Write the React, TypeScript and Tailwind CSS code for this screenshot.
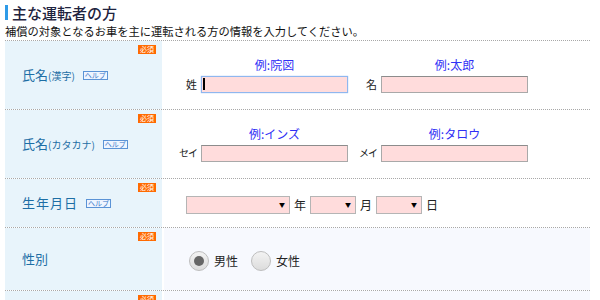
import React from 'react'

const jp = { fontFamily: '"Noto Sans CJK JP", "Noto Sans", sans-serif' }

const Badge = () => (
    <span className="absolute right-[6px] top-[4px] bg-[#ff6a00] text-white text-[7px] leading-[9px] px-[2px] h-[9px]">
        必須
    </span>
)

const Help = () => (
    <span className="ml-[8px] inline-flex items-center h-[9px] px-[1px] border border-[#5b93d6] bg-[#eef5ff] text-[#3a78c9] text-[7px] leading-none">
        ヘルプ
    </span>
)

const Row: React.FC<{ label: React.ReactNode; h: string; alt?: boolean; children?: React.ReactNode }> = ({ label, h, alt, children }) => (
    <div className={`flex border-b border-dotted border-[#a8a8a8] ${h}`}>
        <div className="relative w-[157px] shrink-0 bg-[#e8f4fb] flex items-center pl-[17px] text-[#1d6ea5]">
            <Badge />
            {label}
        </div>
        <div className={`ml-[2px] flex-1 flex items-center pl-[22px] ${alt ? 'bg-[#f7f9fe]' : 'bg-white'}`}>
            {children}
        </div>
    </div>
)

const NameField: React.FC<{ pre: string; ex: string; focus?: boolean; gap?: string; small?: boolean }> = ({ pre, ex, focus, gap, small }) => (
    <div className={`flex items-end ${gap ?? ''}`}>
        <span
            className={`w-[15px] flex justify-end whitespace-nowrap pr-[4px] mb-[1px] leading-[16px] text-[#222] ${small ? 'text-[10px] tracking-[-1px]' : 'text-[11px]'}`}
        >
            {pre}
        </span>
        <div className="flex flex-col items-center">
            <span className="text-[12px] leading-[14px] text-[#2f2ff5] mb-[4px]">{ex}</span>
            <div
                className={`w-[147px] h-[17px] bg-[#ffdcdc] border ${focus ? 'border-[#8fb7ef] shadow-[0_0_1px_#8fb7ef]' : 'border-[#a9a9a9] border-t-[#8c8c8c]'} flex items-center pl-[1px]`}
            >
                {focus && <span className="w-[1.5px] h-[12px] bg-black" />}
            </div>
        </div>
    </div>
)

const Select: React.FC<{ w: string }> = ({ w }) => (
    <div className={`${w} h-[18px] bg-[#ffdcdc] border border-[#b5b5b5] flex items-center justify-end pr-[4px]`}>
        <span className="text-[6px] leading-none text-black">▼</span>
    </div>
)

const Radio: React.FC<{ on?: boolean; label: string }> = ({ on, label }) => (
    <div className="flex items-center mr-[13px]">
        <span className="w-[20px] h-[20px] rounded-full border border-[#bdbdbd] bg-gradient-to-b from-[#f3f3f3] to-[#dcdcdc] flex items-center justify-center">
            {on && <span className="w-[10px] h-[10px] rounded-full bg-[#666]" />}
        </span>
        <span className="ml-[5px] text-[12px] text-[#222]">{label}</span>
    </div>
)

export default function App() {
    return (
        <div className="w-[600px] h-[300px] overflow-hidden bg-white px-[5px] pt-[3px]" style={jp}>
            <div className="flex items-center h-[19px]">
                <span className="w-[3px] h-[15px] bg-[#2f9be8] mr-[4px]" />
                <span className="text-[15px] leading-none text-[#1f2440] font-medium">主な運転者の方</span>
            </div>
            <div className="text-[11.25px] leading-[17px] text-[#111] mt-[1px]">
                補償の対象となるお車を主に運転される方の情報を入力してください。
            </div>
            <div className="border-t border-dotted border-[#a8a8a8] w-[585px]">
                <Row
                    h="h-[69px]"
                    label={
                        <>
                            <span className="text-[13px]">氏名</span>
                            <span className="text-[10px]">(漢字)</span>
                            <Help />
                        </>
                    }
                >
                    <NameField pre="姓" ex="例:院図" focus />
                    <NameField pre="名" ex="例:太郎" gap="ml-[18px]" />
                </Row>
                <Row
                    h="h-[69px]"
                    label={
                        <>
                            <span className="text-[13px]">氏名</span>
                            <span className="text-[10px]">(カタカナ)</span>
                            <Help />
                        </>
                    }
                >
                    <NameField pre="セイ" ex="例:インズ" small />
                    <NameField pre="メイ" ex="例:タロウ" gap="ml-[18px]" small />
                </Row>
                <Row
                    h="h-[49px]"
                    label={
                        <>
                            <span className="text-[13px] tracking-[1px]">生年月日</span>
                            <Help />
                        </>
                    }
                >
                    <div className="flex items-center text-[12px] text-[#222] pt-[3px]">
                        <Select w="w-[104px]" />
                        <span className="mx-[4px]">年</span>
                        <Select w="w-[46px]" />
                        <span className="mx-[4px]">月</span>
                        <Select w="w-[46px]" />
                        <span className="mx-[4px]">日</span>
                    </div>
                </Row>
                <Row h="h-[63px]" alt label={<span className="text-[13px]">性別</span>}>
                    <div className="flex items-center pt-[3px] pl-[3px]">
                        <Radio on label="男性" />
                        <Radio label="女性" />
                    </div>
                </Row>
                <Row h="h-[40px]" alt label={null} />
            </div>
        </div>
    )
}
